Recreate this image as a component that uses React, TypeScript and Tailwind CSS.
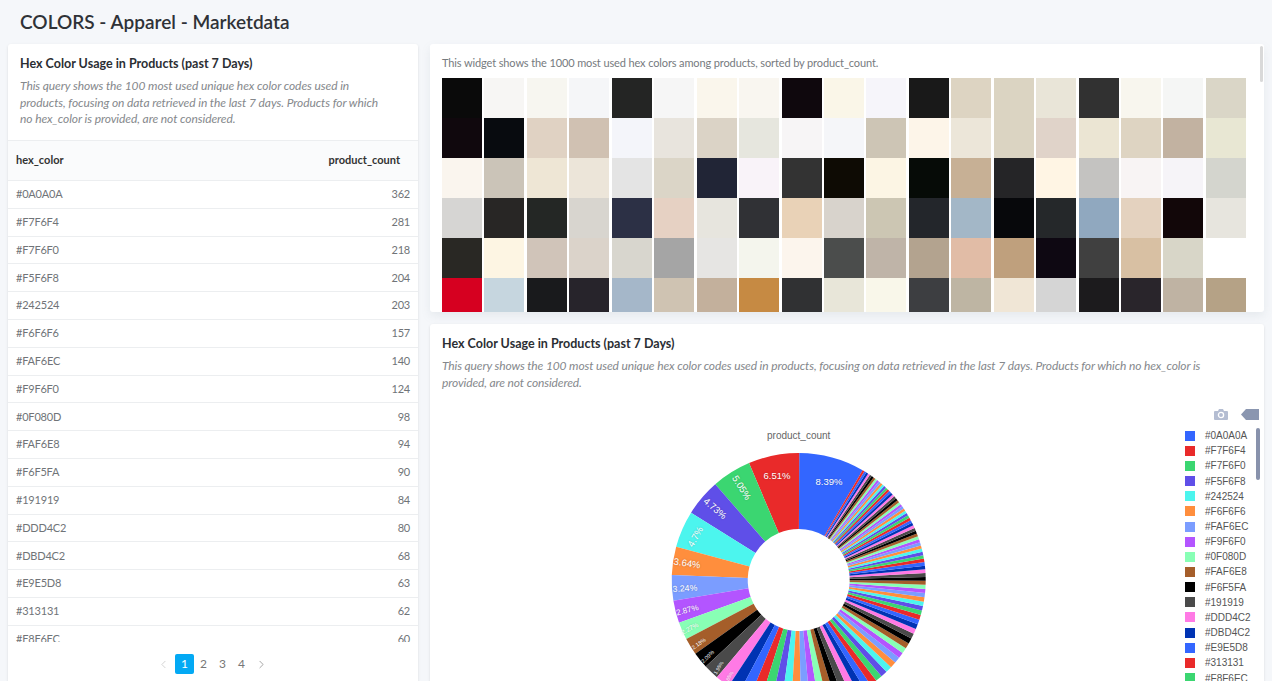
import { ChevronLeft, ChevronRight } from "lucide-react";

const rows = [
    ["#0A0A0A", 362],
    ["#F7F6F4", 281],
    ["#F7F6F0", 218],
    ["#F5F6F8", 204],
    ["#242524", 203],
    ["#F6F6F6", 157],
    ["#FAF6EC", 140],
    ["#F9F6F0", 124],
    ["#0F080D", 98],
    ["#FAF6E8", 94],
    ["#F6F5FA", 90],
    ["#191919", 84],
    ["#DDD4C2", 80],
    ["#DBD4C2", 68],
    ["#E9E5D8", 63],
    ["#313131", 62],
    ["#F8F6EC", 60],
] as const;

const swatches = [
    "#0A0A0A", "#F7F6F4", "#F7F6F0", "#F5F6F8", "#242524", "#F6F6F6", "#FAF6EC", "#F9F6F0", "#0F080D", "#FAF6E8", "#F6F5FA", "#191919", "#DDD4C2", "#DBD4C2", "#E9E5D8", "#313131", "#F8F6EE", "#F5F6F5", "#DAD6C7",
    "#10080D", "#080B0F", "#E0D2C3", "#D0C1B2", "#F4F5FA", "#E8E4DD", "#DBD3C6", "#E6E6DE", "#F7F5F6", "#F5F6F9", "#CDC5B5", "#FDF5E9", "#ECE6D9", "#DBD4C2", "#E0D3C9", "#EBE5D3", "#DED4C2", "#C2B2A1", "#E8E7D3",
    "#FAF5EE", "#CBC4B8", "#EEE6D5", "#ECE5D9", "#E4E4E4", "#DBD5C7", "#212536", "#F9F3F9", "#333333", "#0E0B04", "#FCF5E4", "#060B07", "#C7B095", "#252527", "#FFF5E4", "#C4C3C1", "#F8F4F4", "#F6F4F8", "#D4D5CE",
    "#D6D5D3", "#282625", "#242725", "#D8D5CF", "#2C3045", "#E6D1C3", "#E7E5DE", "#303135", "#E9D2B7", "#D8D3CC", "#CCC6B3", "#23262B", "#A3B7C7", "#07080B", "#25282A", "#90A8BF", "#E4D2BF", "#120709", "#E7E5DE",
    "#292824", "#FDF5E3", "#D0C4B9", "#DBD3CA", "#D8D6CE", "#A5A5A5", "#E6E5E3", "#F4F5ED", "#FCF5ED", "#4B4D4C", "#BFB4A8", "#B3A38F", "#E1BCA6", "#BFA07D", "#0E0812", "#404040", "#D8C0A3", "#D8D6C8", "#FFFFFF",
    "#D60020", "#C6D6DF", "#191A1C", "#27242B", "#A5B7C9", "#CFC3B2", "#C3B09C", "#C68A43", "#303133", "#E8E6D9", "#F9F7EA", "#3D3E41", "#BEB5A3", "#F0E6D6", "#D5D5D5", "#1C1B1D", "#29252B", "#BFB3A3", "#B5A286",
];

const palette = ["#3366FF", "#E92A2A", "#3BD671", "#5F4FE8", "#4CF5EE", "#FF8E3D", "#7B9DFF", "#B355FF", "#88FFB5", "#A55E2A", "#000000", "#4A4A4A", "#FF7AE5", "#0033B3"];

// top 17 from the table, the long tail just falls off smoothly
const values: number[] = rows.map((r) => r[1]);
for (let i = 0; i < 83; i++) values.push(10 + 46 * Math.exp(-i / 25));
const total = values.reduce((a, b) => a + b, 0);

const cx = 356.7;
const cy = 178;
const outer = 127;
const inner = 51;

function pt(r: number, deg: number) {
    const a = (deg * Math.PI) / 180;
    return `${(cx + r * Math.sin(a)).toFixed(2)} ${(cy - r * Math.cos(a)).toFixed(2)}`;
}

function slices() {
    let angle = 30.2;
    return values.map((v, i) => {
        const next = angle - (v / total) * 360;
        const large = angle - next > 180 ? 1 : 0;
        const d = `M${pt(inner, angle)}L${pt(outer, angle)}A${outer} ${outer} 0 ${large} 0 ${pt(outer, next)}L${pt(inner, next)}A${inner} ${inner} 0 ${large} 1 ${pt(inner, angle)}Z`;
        angle = next;
        return <path key={i} d={d} fill={palette[i % palette.length]} />;
    });
}

const labels: [string, number, number, number, number][] = [
    ["8.39%", 387, 80, 0, 9.5],
    ["6.51%", 335, 74, 0, 9.5],
    ["5.05%", 299, 86, 58, 9.5],
    ["4.73%", 272.6, 107, 40, 9.5],
    ["4.7%", 254, 135, -60, 9.5],
    ["3.64%", 245, 162, 8, 9.5],
    ["3.24%", 243, 187, -3, 8.7],
    ["2.87%", 245.5, 208.5, -15, 8],
    ["2.27%", 248, 227, -27, 6.5],
    ["2.18%", 257, 242, -35, 5.5],
    ["2.09%", 266, 255, -45, 5.5],
    ["1.95%", 277, 266, -60, 5],
    ["1.85%", 287, 276, -60, 5],
];

const desc =
    "This query shows the 100 most used unique hex color codes used in products, focusing on data retrieved in the last 7 days. Products for which no hex_color is provided, are not considered.";

function Legend() {
    return (
        <div className="relative mr-[-12px] w-[80px] shrink-0 pt-[26px] pl-[1px] font-['Liberation_Sans',sans-serif] text-[10px] text-[#555]">
            {rows.map(([hex], i) => (
                <div key={hex} className="flex h-[15.17px] items-center gap-[10px]">
                    <span className="h-[10px] w-[10px] shrink-0" style={{ background: palette[i % palette.length] }} />
                    <span>{hex}</span>
                </div>
            ))}
            <div className="absolute top-[26px] right-[4px] h-[52px] w-[4px] rounded-full bg-[#8892ac]" />
        </div>
    );
}

function ModeBar() {
    return (
        <div className="absolute top-[7px] right-[-7px] flex items-center gap-[13px]">
            <svg width="14" height="11" viewBox="0 0 14 11">
                <path d="M1 2h3l1-2h4l1 2h3a1 1 0 0 1 1 1v7a1 1 0 0 1-1 1H1a1 1 0 0 1-1-1V3a1 1 0 0 1 1-1z" fill="#b4bdd2" />
                <circle cx="7" cy="6" r="2.6" fill="none" stroke="#fff" strokeWidth="1.3" />
            </svg>
            <svg width="18" height="11" viewBox="0 0 18 11">
                <path d="M5 0h13v11H5L0 5.5z" fill="#8a96b0" />
            </svg>
        </div>
    );
}

export default function App() {
    return (
        <div className="flex h-[681px] flex-col overflow-hidden bg-[#f5f7fa] font-['Lato',sans-serif] text-[#333]">
            <h1 className="flex h-[44px] shrink-0 items-center pl-[20px] text-[19px] font-semibold text-[#2f3237]">
                COLORS - Apparel - Marketdata
            </h1>
            <div className="flex min-h-0 flex-1 gap-3 px-2">
                <div className="flex w-[410px] shrink-0 flex-col rounded-t-[3px] bg-white shadow-sm">
                    <div className="h-[97px] shrink-0 border-b border-[#eceef0] px-3 pt-[10px]">
                        <h2 className="text-[12.5px] leading-[20px] font-bold text-[#2b2e33]">Hex Color Usage in Products (past 7 Days)</h2>
                        <p className="mt-[4px] w-[365px] text-[12px] leading-[16.5px] tracking-[-0.08px] text-[#85888c] italic">{desc}</p>
                    </div>
                    <div className="min-h-0 flex-1 overflow-hidden">
                        <div className="flex h-[40px] items-center justify-between border-b border-[#eceef0] bg-[#fafbfc] pr-[18px] pl-[8px] text-[11px] font-bold text-[#333]">
                            <span>hex_color</span>
                            <span>product_count</span>
                        </div>
                        {rows.map(([hex, count]) => (
                            <div key={hex} className="flex h-[27.8px] items-center justify-between border-b border-[#eceef0] px-2 text-[11px] tracking-[-0.2px] text-[#707478]">
                                <span>{hex}</span>
                                <span>{count}</span>
                            </div>
                        ))}
                    </div>
                    <div className="flex h-[39px] shrink-0 items-start justify-center gap-[4px] pt-[12px] pr-[1px] text-[12px] text-[#777]">
                        <ChevronLeft size={13} strokeWidth={1.2} className="mt-[3.5px] mr-[1px] text-[#bbb]" />
                        <span className="flex h-[20px] w-[19px] items-center justify-center rounded-[2px] bg-[#03a9f4] text-white">1</span>
                        <span className="-ml-[2px] flex h-[20px] w-[15px] items-center justify-center">2</span>
                        <span className="flex h-[20px] w-[15px] items-center justify-center">3</span>
                        <span className="flex h-[20px] w-[15px] items-center justify-center">4</span>
                        <ChevronRight size={13} strokeWidth={1.2} className="mt-[3.5px] ml-[2px] text-[#777]" />
                    </div>
                </div>
                <div className="flex min-w-0 flex-1 flex-col gap-3">
                    <div className="relative h-[268px] shrink-0 overflow-hidden rounded-[3px] bg-white pt-[11px] pl-3 shadow-[0_4px_10px_rgba(120,140,150,0.12)]">
                        <p className="h-[23px] text-[11px] leading-[16px] tracking-[-0.12px] text-[#767a7e]">
                            This widget shows the 1000 most used hex colors among products, sorted by product_count.
                        </p>
                        <div className="grid w-[804px] grid-cols-[repeat(19,40px)] justify-between">
                            {swatches.map((c, i) => (
                                <div key={i} className="h-[40px]" style={{ background: c }} />
                            ))}
                        </div>
                        <div className="absolute top-[2px] right-[1px] h-[36px] w-[3px] rounded-full bg-[#d9d9d9]" />
                    </div>
                    <div className="flex min-h-0 flex-1 flex-col rounded-t-[3px] bg-white px-3 pt-[10px] shadow-sm">
                        <h2 className="text-[12.5px] leading-[20px] font-bold text-[#2b2e33]">Hex Color Usage in Products (past 7 Days)</h2>
                        <p className="mt-[4px] h-[44px] w-[790px] text-[12px] leading-[16.5px] tracking-[-0.12px] text-[#85888c] italic">{desc}</p>
                        <div className="relative flex min-h-0 flex-1 justify-between">
                            <ModeBar />
                            <svg width="714" height="300" viewBox="0 0 714 300" className="shrink-0">
                                <text x={cx} y="37" textAnchor="middle" fontFamily="Liberation Sans" fontSize="10" fill="#666">
                                    product_count
                                </text>
                                {slices()}
                                {labels.map(([t, x, y, rot, size]) => (
                                    <text
                                        key={t}
                                        x={x}
                                        y={y}
                                        textAnchor="middle"
                                        dominantBaseline="middle"
                                        fontFamily="Liberation Sans"
                                        fontSize={size}
                                        fill="#fff"
                                        className="[text-shadow:0_0_2px_rgba(0,0,0,0.25)]"
                                        transform={`rotate(${rot} ${x} ${y})`}
                                    >
                                        {t}
                                    </text>
                                ))}
                            </svg>
                            <Legend />
                        </div>
                    </div>
                </div>
            </div>
        </div>
    );
}
